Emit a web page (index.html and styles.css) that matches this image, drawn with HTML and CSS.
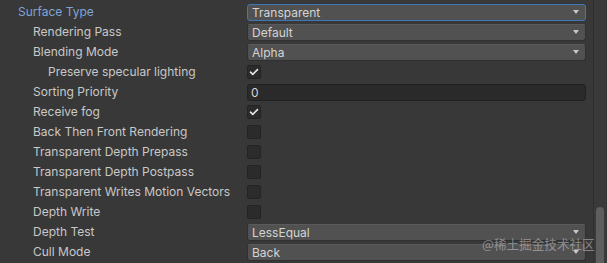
FILE: index.html
```html
<!DOCTYPE html>
<html>
<head>
<meta charset="utf-8">
<link rel="stylesheet" href="styles.css">
</head>
<body>
<div class="inspector">
  <div class="content">
    <div class="row">
      <div class="label lvl0 modified">Surface Type</div>
      <div class="ctrl"><div class="dropdown focused"><span>Transparent</span><i class="arrow"></i></div></div>
    </div>
    <div class="row">
      <div class="label lvl1">Rendering Pass</div>
      <div class="ctrl"><div class="dropdown"><span>Default</span><i class="arrow"></i></div></div>
    </div>
    <div class="row">
      <div class="label lvl1">Blending Mode</div>
      <div class="ctrl"><div class="dropdown"><span>Alpha</span><i class="arrow"></i></div></div>
    </div>
    <div class="row">
      <div class="label lvl2">Preserve specular lighting</div>
      <div class="ctrl"><div class="check on"><svg viewBox="0 0 14 14" width="14" height="14"><path d="M3.5 7.2 L5.8 9.4 L10.5 4.6" fill="none" stroke="#e6e6e6" stroke-width="1.6" stroke-linecap="round" stroke-linejoin="round"/></svg></div></div>
    </div>
    <div class="row">
      <div class="label lvl1">Sorting Priority</div>
      <div class="ctrl"><div class="field">0</div></div>
    </div>
    <div class="row">
      <div class="label lvl1">Receive fog</div>
      <div class="ctrl"><div class="check on"><svg viewBox="0 0 14 14" width="14" height="14"><path d="M3.5 7.2 L5.8 9.4 L10.5 4.6" fill="none" stroke="#e6e6e6" stroke-width="1.6" stroke-linecap="round" stroke-linejoin="round"/></svg></div></div>
    </div>
    <div class="row">
      <div class="label lvl1">Back Then Front Rendering</div>
      <div class="ctrl"><div class="check"></div></div>
    </div>
    <div class="row">
      <div class="label lvl1">Transparent Depth Prepass</div>
      <div class="ctrl"><div class="check"></div></div>
    </div>
    <div class="row">
      <div class="label lvl1">Transparent Depth Postpass</div>
      <div class="ctrl"><div class="check"></div></div>
    </div>
    <div class="row">
      <div class="label lvl1">Transparent Writes Motion Vectors</div>
      <div class="ctrl"><div class="check"></div></div>
    </div>
    <div class="row">
      <div class="label lvl1">Depth Write</div>
      <div class="ctrl"><div class="check"></div></div>
    </div>
    <div class="row">
      <div class="label lvl1">Depth Test</div>
      <div class="ctrl"><div class="dropdown"><span>LessEqual</span><i class="arrow"></i></div></div>
    </div>
    <div class="row">
      <div class="label lvl1">Cull Mode</div>
      <div class="ctrl"><div class="dropdown"><span>Back</span><i class="arrow"></i></div></div>
    </div>
  </div>
  <div class="scrollbar"><div class="thumb"></div></div>
  <div class="watermark">@稀土掘金技术社区</div>
</div>
</body>
</html>
```
FILE: styles.css
```css
html, body {
  margin: 0;
  padding: 0;
  background: #383838;
}
body {
  font-family: Inter, "Noto Sans CJK SC", sans-serif;
  font-size: 12px;
  color: #c8c8c8;
  overflow: hidden;
}
.inspector {
  position: relative;
  display: flex;
  width: 607px;
  height: 263px;
  overflow: hidden;
}
.content {
  width: 593px;
  padding-top: 2px;
}
.row {
  display: grid;
  grid-template-columns: 247px 339px;
  height: 20px;
  align-items: center;
}
.label {
  white-space: nowrap;
  line-height: 20px;
}
.lvl0 { padding-left: 18px; }
.lvl1 { padding-left: 33px; }
.lvl2 { padding-left: 48px; }
.modified { color: #7fa4d8; }
.ctrl {
  display: flex;
  align-items: center;
  height: 20px;
}
.dropdown {
  box-sizing: border-box;
  width: 339px;
  height: 17px;
  background: #515151;
  border: 1px solid #303030;
  border-top-color: #5a5a5a;
  border-radius: 3px;
  display: flex;
  align-items: center;
  justify-content: space-between;
  padding: 0 6px 0 4px;
  color: #d4d4d4;
}
.dropdown.focused {
  border: 1px solid #3f78b8;
}
.arrow {
  width: 0;
  height: 0;
  border-left: 3.5px solid transparent;
  border-right: 3.5px solid transparent;
  border-top: 4px solid #c8c8c8;
}
.check {
  box-sizing: border-box;
  width: 14px;
  height: 14px;
  background: #2b2b2b;
  border: 1px solid #232323;
  border-radius: 2px;
  display: flex;
  align-items: center;
  justify-content: center;
}
.check svg {
  display: block;
  flex: none;
}
.field {
  box-sizing: border-box;
  width: 339px;
  height: 17px;
  background: #2a2a2a;
  border: 1px solid #212121;
  border-radius: 3px;
  padding-left: 3px;
  line-height: 15px;
  color: #d4d4d4;
}
.scrollbar {
  width: 13px;
  border-left: 1px solid #2f2f2f;
  background: #3a3a3a;
  padding-top: 207px;
  box-sizing: border-box;
  display: flex;
  justify-content: center;
}
.thumb {
  width: 8px;
  height: 80px;
  background: #5e5e5e;
  border-radius: 4px;
}
.watermark {
  position: absolute;
  left: 482px;
  top: 236px;
  font-size: 12.6px;
  line-height: 16px;
  color: rgba(230, 230, 230, 0.45);
  font-family: "Noto Sans CJK SC", sans-serif;
  white-space: nowrap;
}
```
